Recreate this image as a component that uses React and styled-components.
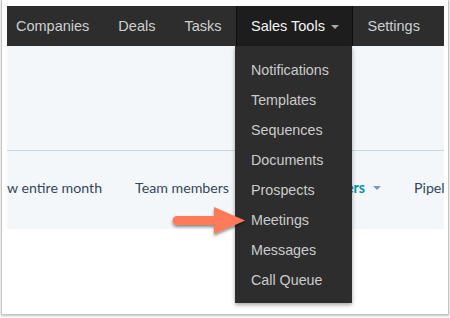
import React from 'react';
import styled, { createGlobalStyle } from 'styled-components';

const GlobalStyle = createGlobalStyle`
  html, body {
    margin: 0;
    padding: 0;
    background: #ffffff;
  }
  body {
    width: 450px;
    height: 318px;
    overflow: hidden;
  }
`;

const Frame = styled.div`
  position: relative;
  margin-left: 1px;
  width: 448px;
  height: 315px;
  box-sizing: border-box;
  padding: 6px 4px 0 5px;
  border: 1px solid #c4c4c4;
  border-top: none;
  box-shadow: 0 1px 2px rgba(0, 0, 0, 0.25);
  background: #ffffff;
`;

const Page = styled.div`
  position: relative;
  display: flex;
  flex-direction: column;
`;

const NavBar = styled.div`
  display: flex;
  align-items: stretch;
  height: 40px;
  background: #2d2d2d;
  font-family: "Liberation Sans", Arial, sans-serif;
  font-size: 14.5px;
`;

const NavItem = styled.div`
  display: flex;
  align-items: center;
  padding: 0 14.5px;
  color: ${p => (p.active ? '#f4f4f4' : '#cfcfcf')};
  background: ${p => (p.active ? '#1d1d1d' : 'transparent')};
  box-shadow: ${p => (p.active ? 'inset 1px 0 0 #0c0c0c, inset -1px 0 0 #0c0c0c' : 'none')};
  &:first-child {
    padding-left: 9px;
  }
`;

const ActiveTab = styled(NavItem)`
  width: 117px;
  box-sizing: border-box;
  padding: 0 0 0 15px;
`;

const Caret = styled.span`
  display: inline-block;
  flex: none;
  margin-left: ${p => p.gap || 6}px;
  margin-top: 2px;
  width: 0;
  height: 0;
  border-left: 4px solid transparent;
  border-right: 4px solid transparent;
  border-top: 4px solid ${p => p.color || '#9a9a9a'};
`;

const Panel = styled.div`
  background: #f4f7fa;
  height: 183px;
  display: flex;
  flex-direction: column;
`;

const PanelTop = styled.div`
  height: 104px;
  border-bottom: 1px solid #cbd6e2;
`;

const FilterRow = styled.div`
  display: flex;
  align-items: center;
  height: 72px;
  white-space: nowrap;
  overflow: hidden;
  font-family: Lato, "Open Sans", sans-serif;
  font-size: 14.2px;
  color: #33475b;
`;

const Filter = styled.div`
  display: flex;
  align-items: center;
  flex: none;
  width: ${p => p.w}px;
  margin-left: ${p => p.ml || 0}px;
  color: ${p => (p.accent ? '#0091ae' : '#33475b')};
  font-weight: ${p => (p.accent ? 700 : 400)};
  justify-content: ${p => (p.right ? 'flex-end' : 'flex-start')};
`;

const Menu = styled.div`
  position: absolute;
  left: 228px;
  top: 40px;
  width: 117px;
  box-sizing: border-box;
  padding: 9px 0 8px;
  background: #2d2d2d;
  box-shadow: 0 2px 4px rgba(0, 0, 0, 0.35);
  font-family: "Liberation Sans", Arial, sans-serif;
  font-size: 14.3px;
  z-index: 2;
`;

const MenuItem = styled.div`
  height: 30px;
  display: flex;
  align-items: center;
  padding-left: 16px;
  color: #cbcbcb;
`;

const Arrow = styled.svg`
  position: absolute;
  left: 165px;
  top: 198px;
  z-index: 3;
  overflow: visible;
`;

const menuItems = [
  'Notifications',
  'Templates',
  'Sequences',
  'Documents',
  'Prospects',
  'Meetings',
  'Messages',
  'Call Queue',
];

export default function App() {
  return (
    <>
      <GlobalStyle />
      <Frame>
        <Page>
          <NavBar>
            <NavItem>Companies</NavItem>
            <NavItem>Deals</NavItem>
            <NavItem>Tasks</NavItem>
            <ActiveTab active>
              Sales Tools
              <Caret color="#a8a8a8" />
            </ActiveTab>
            <NavItem>Settings</NavItem>
          </NavBar>
          <Panel>
            <PanelTop />
            <FilterRow>
              <Filter w={128}>w entire month</Filter>
              <Filter w={110}>Team members</Filter>
              <Filter w={136} right accent>
                Owners
                <Caret color="#7c98b6" gap={8} />
              </Filter>
              <Filter w={40} ml={33}>Pipeline</Filter>
            </FilterRow>
          </Panel>
          <Menu>
            {menuItems.map(item => (
              <MenuItem key={item}>{item}</MenuItem>
            ))}
          </Menu>
        </Page>
        <Arrow width="80" height="40" viewBox="0 0 80 40">
          <defs>
            <filter id="arrowShadow" x="-20%" y="-30%" width="140%" height="170%">
              <feDropShadow dx="0" dy="2" stdDeviation="1.5" floodColor="#000" floodOpacity="0.45" />
            </filter>
          </defs>
          <path
            d="M10 18 L47 18 L47 9 L78 22.5 L47 36 L47 27 L10 27 A4.5 4.5 0 0 1 10 18 Z"
            fill="#ff7a59"
            filter="url(#arrowShadow)"
          />
        </Arrow>
      </Frame>
    </>
  );
}
